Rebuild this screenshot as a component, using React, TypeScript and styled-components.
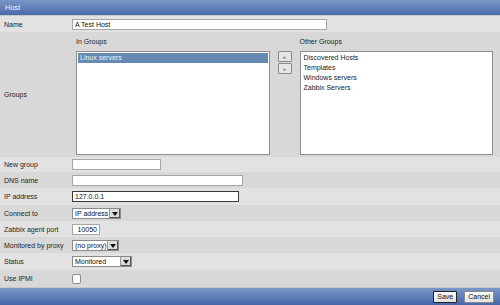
import styled, { createGlobalStyle } from 'styled-components'

const GlobalStyle = createGlobalStyle`
  html, body { margin: 0; padding: 0; background: #e2e2e2; }
  body { font-family: "Liberation Sans", Arial, sans-serif; font-size: 7px; color: #222; }
  * { box-sizing: border-box; }
`

const inGroups = ['Linux servers']
const otherGroups = ['Discovered Hosts', 'Templates', 'Windows servers', 'Zabbix Servers']

export default function App() {
  return (
    <Page>
      <GlobalStyle />
      <TitleBar>Host</TitleBar>

      <Row>
        <Label>Name</Label>
        <TextBox $w={255} value="A Test Host" readOnly />
      </Row>

      <Row $alt $h={125}>
        <Label>Groups</Label>
        <GroupsArea>
          <GroupCol>
            <GroupTitle>In Groups</GroupTitle>
            <ListBox>
              {inGroups.map((g) => <ListItem key={g} $selected>{g}</ListItem>)}
            </ListBox>
          </GroupCol>
          <MoveButtons>
            <SmallButton>«</SmallButton>
            <SmallButton>»</SmallButton>
          </MoveButtons>
          <GroupCol>
            <GroupTitle>Other Groups</GroupTitle>
            <ListBox>
              {otherGroups.map((g) => <ListItem key={g}>{g}</ListItem>)}
            </ListBox>
          </GroupCol>
        </GroupsArea>
      </Row>

      <Row $h={15}>
        <Label>New group</Label>
        <TextBox $w={89} readOnly />
      </Row>
      <Row $alt $h={16}>
        <Label>DNS name</Label>
        <TextBox $w={171} readOnly />
      </Row>
      <Row $h={17}>
        <Label>IP address</Label>
        <TextBox $w={167} $focus value="127.0.0.1" readOnly />
      </Row>
      <Row $alt>
        <Label>Connect to</Label>
        <Select $w={49}>IP address</Select>
      </Row>
      <Row>
        <Label>Zabbix agent port</Label>
        <TextBox $w={28} $right value="10050" readOnly />
      </Row>
      <Row $alt>
        <Label>Monitored by proxy</Label>
        <Select $w={47}>(no proxy)</Select>
      </Row>
      <Row $h={17}>
        <Label>Status</Label>
        <Select $w={60}>Monitored</Select>
      </Row>
      <Row $alt $h={17}>
        <Label>Use IPMI</Label>
        <Check />
      </Row>

      <Footer>
        <FooterButton $default>Save</FooterButton>
        <FooterButton>Cancel</FooterButton>
      </Footer>
    </Page>
  )
}

const Page = styled.div`
  width: 500px;
  height: 305px;
  display: flex;
  flex-direction: column;
  overflow: hidden;
`

const TitleBar = styled.div`
  height: 16px;
  padding: 0 5px;
  display: flex;
  align-items: center;
  font-size: 7.5px;
  color: #f2f5fb;
  background: linear-gradient(#7b97c9, #4a6aab);
  border-bottom: 1px solid #c8c8c8;
`

const Row = styled.div<{ $alt?: boolean; $h?: number }>`
  height: ${(p) => p.$h ?? 16}px;
  display: grid;
  grid-template-columns: 72px 1fr;
  align-items: center;
  background: ${(p) => (p.$alt ? '#d8d8d8' : '#e2e2e2')};
`

const Label = styled.div`
  padding-left: 4px;
  color: #1e1e1e;
  white-space: nowrap;
`

const TextBox = styled.input<{ $w: number; $focus?: boolean; $right?: boolean }>`
  width: ${(p) => p.$w}px;
  height: 11px;
  padding: 0 2px;
  font: inherit;
  color: #111;
  background: #fff;
  border: 1px solid ${(p) => (p.$focus ? '#3a3a3a' : '#a6a6a6')};
  text-align: ${(p) => (p.$right ? 'right' : 'left')};
  outline: none;
`

const Select = styled.div<{ $w: number }>`
  width: ${(p) => p.$w}px;
  height: 11px;
  display: flex;
  align-items: center;
  padding-left: 2px;
  padding-right: 13px;
  position: relative;
  background: #fff;
  border: 1px solid #8a8a8a;
  color: #111;
  white-space: nowrap;
  overflow: hidden;
  &::after {
    content: '';
    position: absolute;
    right: 0;
    top: 0;
    width: 10px;
    height: 9px;
    background: #dcdcdc;
    border-left: 1px solid #9a9a9a;
    box-shadow: inset -1px -1px 0 #555;
  }
  &::before {
    content: '';
    position: absolute;
    right: 2px;
    top: 3px;
    z-index: 1;
    border-left: 3px solid transparent;
    border-right: 3px solid transparent;
    border-top: 4px solid #111;
  }
`

const Check = styled.div`
  width: 9px;
  height: 10px;
  background: #fbfbfb;
  border: 1px solid #8c8c8c;
  border-radius: 2px;
`

const GroupsArea = styled.div`
  height: 100%;
  display: flex;
  padding: 3px 7px 2px 4px;
  gap: 8px;
`

const GroupCol = styled.div`
  flex: 1;
  display: flex;
  flex-direction: column;
`

const GroupTitle = styled.div`
  height: 16px;
  padding-top: 3px;
  color: #1e1e1e;
`

const ListBox = styled.div`
  flex: 1;
  background: #fff;
  border: 1px solid #8e8e8e;
  padding: 1px;
`

const ListItem = styled.div<{ $selected?: boolean }>`
  height: 10px;
  line-height: 10px;
  padding-left: 2px;
  color: ${(p) => (p.$selected ? '#eef2f8' : '#222')};
  background: ${(p) => (p.$selected ? '#6689b3' : 'transparent')};
`

const MoveButtons = styled.div`
  padding-top: 16px;
  display: flex;
  flex-direction: column;
  gap: 1px;
`

const SmallButton = styled.div`
  width: 14px;
  height: 11px;
  display: flex;
  align-items: center;
  justify-content: center;
  font-size: 5px;
  color: #333;
  background: #e6e6e6;
  border: 1px solid #8a8a8a;
  border-radius: 1px;
`

const Footer = styled.div`
  flex: 1;
  display: flex;
  justify-content: flex-end;
  align-items: center;
  gap: 7px;
  padding-right: 6px;
  background: linear-gradient(#7a96c8, #4566a8);
  border-top: 1px solid #c8c8c8;
`

const FooterButton = styled.div<{ $default?: boolean }>`
  height: 12px;
  padding: 0 3px;
  display: flex;
  align-items: center;
  color: #111;
  background: linear-gradient(#fafafa, #e2e2e2);
  border: 1px solid ${(p) => (p.$default ? '#222' : '#8a8a8a')};
  border-radius: 1px;
`
